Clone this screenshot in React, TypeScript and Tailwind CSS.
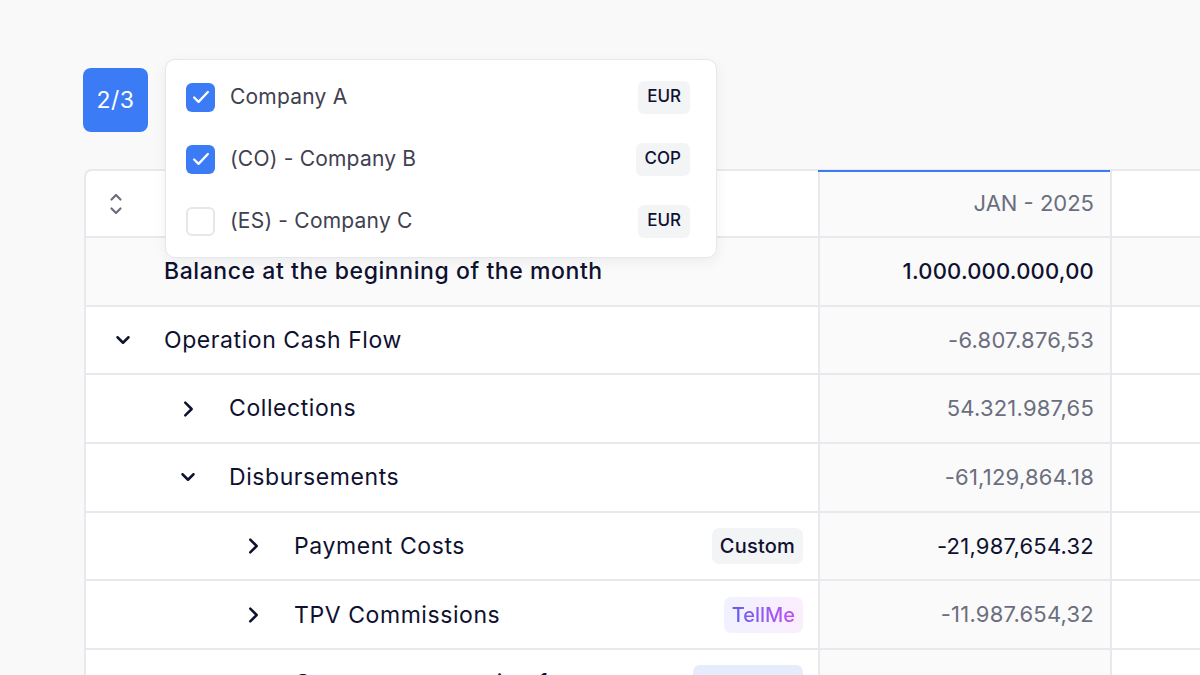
import React from "react";

const font = { fontFamily: "Inter, 'Liberation Sans', sans-serif" };

function Chevron({ dir }: { dir: "down" | "right" }) {
  return (
    <svg width="22" height="22" viewBox="0 0 24 24" fill="none" stroke="#0f1130" strokeWidth="2.7" strokeLinecap="round" strokeLinejoin="round">
      {dir === "down" ? <path d="M6 9l6 6 6-6" /> : <path d="M9 5l7 7-7 7" />}
    </svg>
  );
}

function Check({ checked }: { checked: boolean }) {
  return checked ? (
    <div className="w-[29px] h-[29px] rounded-[6px] bg-[#3b7bf5] flex items-center justify-center">
      <svg width="22" height="22" viewBox="0 0 24 24" fill="none" stroke="white" strokeWidth="2.5" strokeLinecap="round" strokeLinejoin="round">
        <path d="M4.5 12.5l4.8 4.8L19.5 6.5" />
      </svg>
    </div>
  ) : (
    <div className="w-[29px] h-[29px] rounded-[6px] border-2 border-[#e6e7ec] bg-white" />
  );
}

type Row = {
  label: string;
  level: number;
  chevron?: "down" | "right";
  value: string;
  valueDark?: boolean;
  badge?: "custom" | "tellme" | "blue";
  bold?: boolean;
};

const rows: Row[] = [
  { label: "Balance at the beginning of the month", level: 0, value: "1.000.000.000,00", valueDark: true, bold: true },
  { label: "Operation Cash Flow", level: 0, chevron: "down", value: "-6.807.876,53" },
  { label: "Collections", level: 1, chevron: "right", value: "54.321.987,65" },
  { label: "Disbursements", level: 1, chevron: "down", value: "-61,129,864.18" },
  { label: "Payment Costs", level: 2, chevron: "right", value: "-21,987,654.32", valueDark: true, badge: "custom" },
  { label: "TPV Commissions", level: 2, chevron: "right", value: "-11.987.654,32", badge: "tellme" },
  { label: "Currency conversion fees", level: 2, chevron: "right", value: "-3.154.555,41", badge: "blue" },
];

export default function App() {
  return (
    <div className="relative w-[1200px] h-[675px] overflow-hidden bg-[#f9f9fa]" style={font}>
      <div className="pt-[68px] pl-[83px]">
        <div className="w-[65px] h-[64px] rounded-[8px] bg-[#3b7bf5] flex items-center justify-center text-white text-[23px] tracking-[0.02em]">
          2/3
        </div>
      </div>

      <div className="mt-[37px] ml-[84px] w-[1200px] bg-white border-l-2 border-t-2 border-[#e8e8ee] rounded-tl-[8px]">
        {/* header */}
        <div className="flex h-[67px] border-b-2 border-[#e8e8ee]">
          <div className="w-[732px] flex items-center pl-[21px]">
            <svg width="18" height="26" viewBox="0 0 18 26" fill="none" stroke="#6b6e7e" strokeWidth="2.2" strokeLinecap="round" strokeLinejoin="round">
              <path d="M4.5 8.5L9 4l4.5 4.5" />
              <path d="M4.5 17.5L9 22l4.5-4.5" />
            </svg>
          </div>
          <div className="w-[292px] bg-[#fafafa] border-l-2 border-[#e8e8ee] relative flex items-center justify-end pr-[16px] text-[22px] text-[#6b6e7e]">
            <div className="absolute left-[-2px] right-0 top-[-1px] h-[2px] bg-[#3b7bf5]" />
            JAN - 2025
          </div>
          <div className="flex-1 border-l-2 border-[#e8e8ee]" />
        </div>
        {rows.map((r, i) => (
          <div key={i} className={`flex h-[68.7px] border-b-2 border-[#e8e8ee] ${r.bold ? "bg-[#fafafa]" : ""}`}>
            <div className="w-[732px] flex items-center pr-[15px]">
              <div style={{ width: 26 + r.level * 65 }} className="shrink-0" />
              <div className="w-[52px] shrink-0 flex items-center">
                {r.chevron && <Chevron dir={r.chevron} />}
              </div>
              <div className={`flex-1 text-[23px] tracking-[0.025em] text-[#0f1130] ${r.bold ? "font-medium" : ""}`}>{r.label}</div>
              {r.badge === "custom" && (
                <div className="h-[36px] px-[8px] rounded-[7px] bg-[#f3f4f6] flex items-center text-[20px] tracking-[0.01em] font-medium text-[#0f1130]">Custom</div>
              )}
              {r.badge === "tellme" && (
                <div className="h-[36px] px-[8px] rounded-[7px] bg-gradient-to-r from-[#f1f1ff] to-[#fbeefd] flex items-center text-[20px] font-medium">
                  <span className="bg-gradient-to-r from-[#5b5ef0] to-[#c04ef0] bg-clip-text text-transparent">TellMe</span>
                </div>
              )}
              {r.badge === "blue" && (
                <div className="h-[36px] w-[110px] px-[8px] rounded-[7px] bg-[#e5edfd] flex items-center text-[20px] font-medium text-[#3b7bf5]">Auto</div>
              )}
            </div>
            <div className={`w-[292px] bg-[#fafafa] border-l-2 border-[#e8e8ee] flex items-center justify-end pr-[16px] text-[22px] tracking-[0.01em] ${r.valueDark ? "text-[#0f1130]" : "text-[#6b6e7e]"} ${r.bold ? "font-medium" : ""}`}>
              {r.value}
            </div>
            <div className="flex-1 border-l-2 border-[#e8e8ee]" />
          </div>
        ))}
      </div>

      {/* dropdown */}
      <div className="absolute left-[165px] top-[59px] w-[552px] h-[199px] bg-white rounded-[10px] border border-[#e6e7ec] shadow-[0_4px_14px_rgba(20,20,40,0.06)] pl-[20px] pr-[26px] pt-[6px] flex flex-col">
        {[
          { name: "Company A", cur: "EUR", checked: true },
          { name: "(CO) - Company B", cur: "COP", checked: true },
          { name: "(ES) - Company C", cur: "EUR", checked: false },
        ].map((c, i) => (
          <div key={i} className="h-[62px] flex items-center">
            <Check checked={c.checked} />
            <div className="ml-[15px] flex-1 text-[21px] tracking-[0.01em] text-[#3f4150]">{c.name}</div>
            <div className="h-[33px] px-[9px] rounded-[6px] bg-[#f3f4f6] flex items-center text-[17px] font-medium text-[#0f1130]">{c.cur}</div>
          </div>
        ))}
      </div>
    </div>
  );
}
